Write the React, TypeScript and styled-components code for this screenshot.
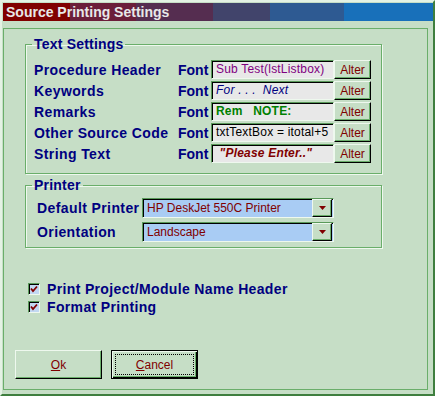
import React from 'react';
import styled, { createGlobalStyle, css } from 'styled-components';

const GlobalStyle = createGlobalStyle`
  html, body {
    margin: 0;
    padding: 0;
    background: #c6dec6;
  }
  body {
    font-family: "Liberation Sans", Arial, sans-serif;
  }
`;

const Window = styled.div`
  box-sizing: border-box;
  width: 435px;
  height: 396px;
  background: #c6dec6;
  border: 2px solid;
  border-color: #e4f2e4 #3f7f3f #3f7f3f #e4f2e4;
  padding: 1px 0 0 1px;
  display: flex;
  flex-direction: column;
`;

const TitleBar = styled.div`
  height: 18px;
  line-height: 18px;
  padding-left: 3px;
  font-size: 14px;
  font-weight: bold;
  color: #e8e8e8;
  background: linear-gradient(
    to right,
    #800000 0 67px,
    #6b1f3a 67px 133px,
    #552d50 133px 210px,
    #41446b 210px 267px,
    #2e5a92 267px 341px,
    #1870ba 341px 100%
  );
`;

const Panel = styled.div`
  flex: 1;
  margin: 7px 5px 4px 0;
  border: 1px solid #6aae6a;
  display: flex;
  flex-direction: column;
`;

const Group = styled.fieldset<{ $top: number; $bottom: number }>`
  box-sizing: border-box;
  width: 357px;
  margin: ${({ $top }) => $top}px 0 0 21px;
  padding: 0 0 ${({ $bottom }) => $bottom}px 8px;
  border: 1px solid #6aae6a;
  box-shadow: 1px 1px 0 #eef8ee, inset 1px 1px 0 #eef8ee;
`;

const Legend = styled.legend`
  padding: 0 2px;
  margin-left: -2px;
  font-size: 14px;
  line-height: 17px;
  font-weight: bold;
  letter-spacing: 0.2px;
  color: #000080;
`;

const Rows = styled.div<{ $gap: number; $top: number; $indent?: number }>`
  display: flex;
  flex-direction: column;
  gap: ${({ $gap }) => $gap}px;
  padding-top: ${({ $top }) => $top}px;
  padding-left: ${({ $indent }) => $indent ?? 0}px;
`;

const Row = styled.div<{ $height: number }>`
  display: flex;
  align-items: center;
  height: ${({ $height }) => $height}px;
`;

const Label = styled.span<{ $width: number }>`
  width: ${({ $width }) => $width}px;
  flex: none;
  font-size: 14px;
  font-weight: bold;
  letter-spacing: 0.4px;
  color: #000080;
  white-space: nowrap;
`;

const FontTag = styled(Label)`
  letter-spacing: 0;
`;

const sunken = css`
  box-sizing: border-box;
  border: 1px solid;
  border-color: #5a9a5a #eef8ee #eef8ee #5a9a5a;
  box-shadow: inset 1px 1px 0 #000;
`;

const raised = css`
  box-sizing: border-box;
  border: 1px solid;
  border-color: #eef8ee #000 #000 #eef8ee;
  box-shadow: inset -1px -1px 0 #6aae6a;
  background: #c6dec6;
`;

type Tone = 'proc' | 'keyword' | 'remark' | 'code' | 'string';

const tones: Record<Tone, ReturnType<typeof css>> = {
  proc: css`color: #800080;`,
  keyword: css`color: #000080; font-style: italic;`,
  remark: css`color: #008000; font-weight: bold;`,
  code: css`color: #000;`,
  string: css`color: #800000; font-weight: bold; font-style: italic;`,
};

const Sample = styled.div<{ $tone: Tone }>`
  ${sunken};
  width: 123px;
  height: 19px;
  padding: 0 0 0 4px;
  background: #e8e8e8;
  font-size: 12px;
  letter-spacing: 0.2px;
  line-height: 17px;
  white-space: pre;
  overflow: hidden;
  ${({ $tone }) => tones[$tone]};
`;

const AlterButton = styled.button`
  ${raised};
  width: 37px;
  height: 19px;
  padding: 0;
  font-family: "Liberation Sans", Arial, sans-serif;
  font-size: 12px;
  color: #800000;
`;

const Combo = styled.div`
  ${sunken};
  width: 192px;
  height: 20px;
  display: flex;
  align-items: center;
  background: #a9ccf4;
  padding: 1px 1px 1px 4px;
  font-size: 12px;
  color: #800000;
`;

const ComboText = styled.span`
  flex: 1;
  white-space: nowrap;
`;

const ComboArrow = styled.span`
  ${raised};
  width: 20px;
  height: 18px;
  display: flex;
  align-items: center;
  justify-content: center;
`;

const Checks = styled.div`
  margin: 32px 0 0 24px;
  display: flex;
  flex-direction: column;
`;

const CheckRow = styled.label`
  display: flex;
  align-items: center;
  gap: 7px;
  height: 18px;
  font-size: 14px;
  font-weight: bold;
  letter-spacing: 0.35px;
  color: #000080;
`;

const CheckBox = styled.span`
  ${sunken};
  width: 12px;
  height: 12px;
  background: #c2d8f2;
  display: flex;
  align-items: center;
  justify-content: center;
`;

const Buttons = styled.div`
  margin: 34px 0 0 11px;
  display: flex;
  gap: 9px;
`;

const DialogButton = styled.button<{ $default?: boolean }>`
  ${raised};
  width: 87px;
  height: 29px;
  padding: 3px;
  font-family: "Liberation Sans", Arial, sans-serif;
  font-size: 12px;
  color: #800000;
  ${({ $default }) =>
    $default &&
    css`
      border: 1px solid #000;
      box-shadow: inset 1px 1px 0 #eef8ee, inset -1px -1px 0 #000, inset -2px -2px 0 #6aae6a;
    `}
`;

const Caption = styled.span<{ $focus?: boolean }>`
  display: block;
  height: 100%;
  box-sizing: border-box;
  line-height: 21px;
  border: 1px dotted ${({ $focus }) => ($focus ? '#000' : 'transparent')};
`;

const fonts: { name: string; sample: string; tone: Tone }[] = [
  { name: 'Procedure Header', sample: 'Sub Test(lstListbox)', tone: 'proc' },
  { name: 'Keywords', sample: 'For . . .  Next', tone: 'keyword' },
  { name: 'Remarks', sample: 'Rem   NOTE:', tone: 'remark' },
  { name: 'Other Source Code', sample: 'txtTextBox = itotal+5', tone: 'code' },
  { name: 'String Text', sample: ' "Please Enter.." ', tone: 'string' },
];

const printers = [
  { name: 'Default Printer', value: 'HP DeskJet 550C Printer' },
  { name: 'Orientation', value: 'Landscape' },
];

const Arrow = () => (
  <svg width="7" height="4" viewBox="0 0 7 4">
    <polygon points="0,0 7,0 3.5,4" fill="#800000" />
  </svg>
);

const Tick = () => (
  <svg width="8" height="8" viewBox="0 0 8 8">
    <polyline points="1,3.5 3,6 7,1.5" fill="none" stroke="#800000" strokeWidth="1.8" />
  </svg>
);

export default function App() {
  return (
    <>
      <GlobalStyle />
      <Window>
        <TitleBar>Source Printing Settings</TitleBar>
        <Panel>
          <Group $top={7} $bottom={10}>
            <Legend>Text Settings</Legend>
            <Rows $gap={2} $top={7}>
              {fonts.map((f) => (
                <Row key={f.name} $height={19}>
                  <Label $width={144}>{f.name}</Label>
                  <FontTag $width={33}>Font</FontTag>
                  <Sample $tone={f.tone}>{f.sample}</Sample>
                  <AlterButton>Alter</AlterButton>
                </Row>
              ))}
            </Rows>
          </Group>
          <Group $top={3} $bottom={5}>
            <Legend>Printer</Legend>
            <Rows $gap={4} $top={4} $indent={3}>
              {printers.map((p) => (
                <Row key={p.name} $height={20}>
                  <Label $width={105}>{p.name}</Label>
                  <Combo>
                    <ComboText>{p.value}</ComboText>
                    <ComboArrow>
                      <Arrow />
                    </ComboArrow>
                  </Combo>
                </Row>
              ))}
            </Rows>
          </Group>
          <Checks>
            <CheckRow>
              <CheckBox>
                <Tick />
              </CheckBox>
              Print Project/Module Name Header
            </CheckRow>
            <CheckRow>
              <CheckBox>
                <Tick />
              </CheckBox>
              Format Printing
            </CheckRow>
          </Checks>
          <Buttons>
            <DialogButton>
              <Caption>
                <u>O</u>k
              </Caption>
            </DialogButton>
            <DialogButton $default>
              <Caption $focus>
                <u>C</u>ancel
              </Caption>
            </DialogButton>
          </Buttons>
        </Panel>
      </Window>
    </>
  );
}
